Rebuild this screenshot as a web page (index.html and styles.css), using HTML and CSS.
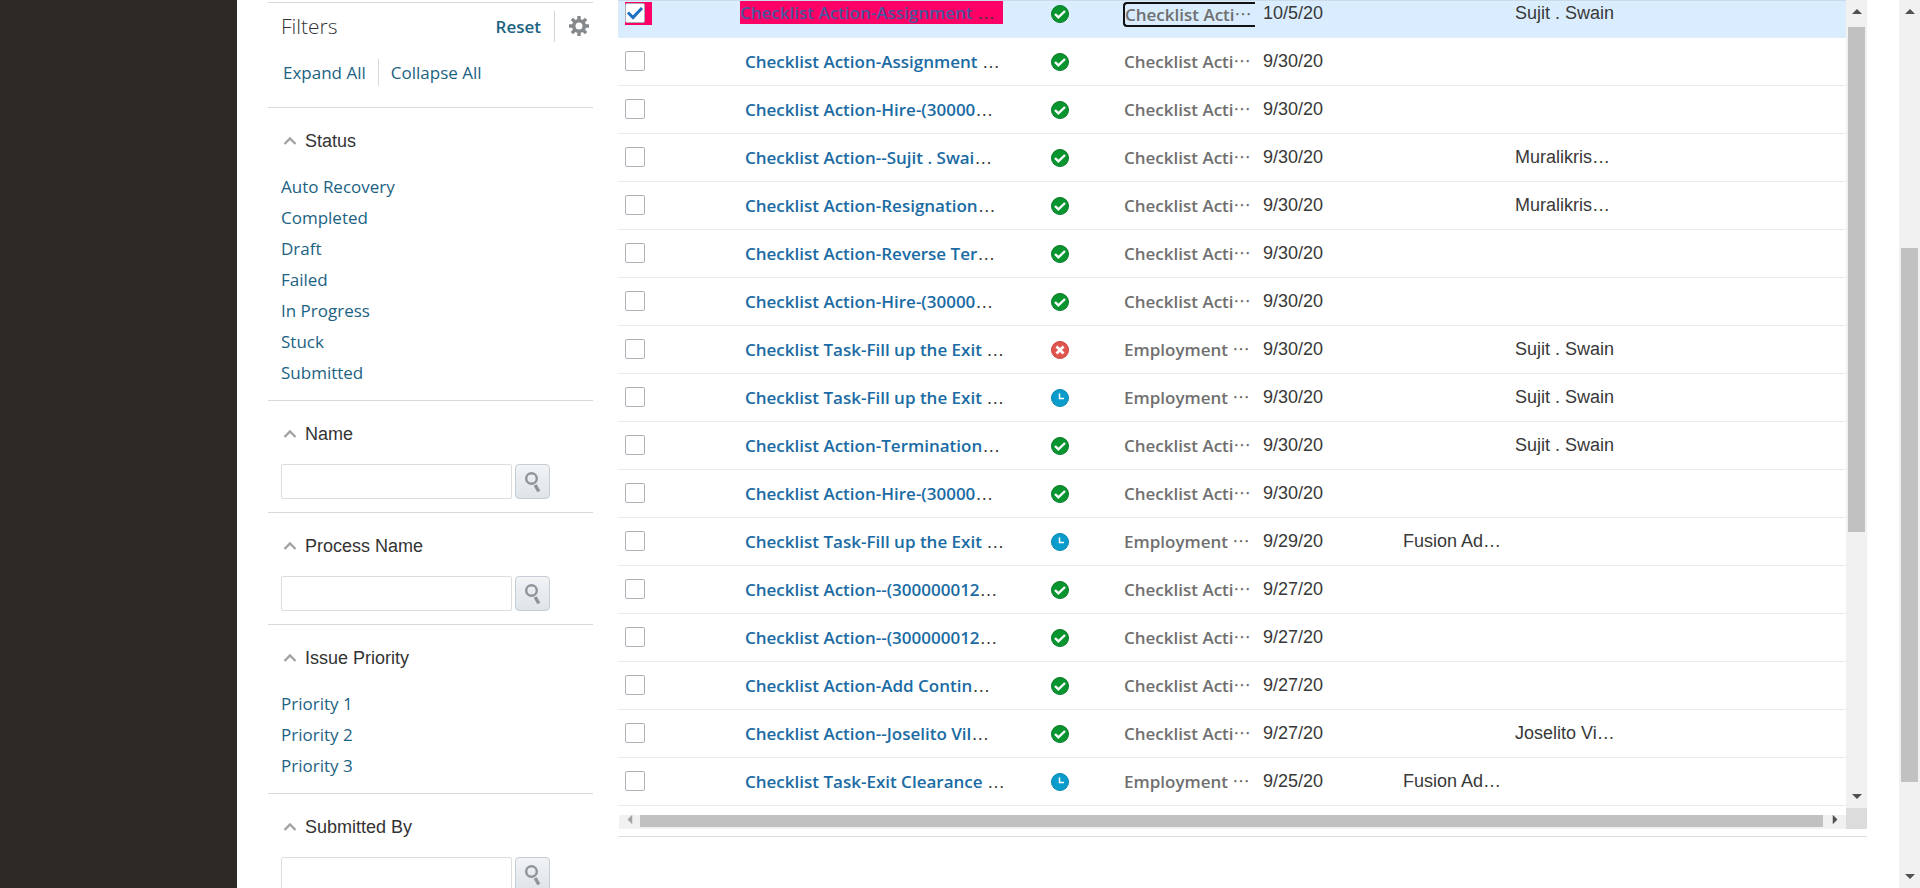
FILE: index.html
```html
<!DOCTYPE html>
<html lang="en">
<head>
<meta charset="utf-8">
<title>Transactions</title>
<link rel="stylesheet" href="styles.css">
</head>
<body>
<svg class="sprite" aria-hidden="true">
  <symbol id="ok" viewBox="0 0 18 18"><circle cx="9" cy="9" r="8.5" fill="#08952f" stroke="#067a27"/><path d="M4 9l3.400 3.400L14 6" fill="none" stroke="#fff" stroke-width="2.400"/></symbol>
  <symbol id="fail" viewBox="0 0 18 18"><circle cx="9" cy="9" r="8.500" fill="#e0564f" stroke="#c9463f"/><path d="M5.500 5.500l7 7M12.500 5.500l-7 7" fill="none" stroke="#fff" stroke-width="2.800"/></symbol>
  <symbol id="wait" viewBox="0 0 18 18"><circle cx="9" cy="9" r="8.500" fill="#0a9ccb" stroke="#0886b5"/><path d="M8.500 4.500v5h4.500" fill="none" stroke="#fff" stroke-width="1.500"/></symbol>
  <symbol id="chev" viewBox="0 0 14 10"><path d="M1.500 8L7 2.500L12.500 8" fill="none" stroke="#a3a3a3" stroke-width="2.400"/></symbol>
  <symbol id="lens" viewBox="0 0 18 22"><circle cx="7.500" cy="7.500" r="5.300" fill="none" stroke="#8f9497" stroke-width="2.400"/><path d="M11.200 14l3.600 6.500" stroke="#8f9497" stroke-width="3.400"/></symbol>
  <symbol id="gear" viewBox="0 0 20 20"><circle cx="10" cy="10" r="5.300" fill="none" stroke="#85898c" stroke-width="3.600"/><path d="M10 0v4M10 16v4M0 10h4M16 10h4M2.900 2.900l2.900 2.900M14.200 14.200l2.900 2.900M17.100 2.900l-2.900 2.900M5.800 14.200l-2.900 2.900" stroke="#85898c" stroke-width="3.400"/></symbol>
  <symbol id="tri" viewBox="0 0 10 5"><path d="M0 5L5 0L10 5Z" fill="currentColor"/></symbol>
</svg>
<div class="page">
  <div class="rail"></div>
  <aside class="filters">
    <div class="filters-head">
      <h2>Filters</h2>
      <a class="reset" href="#">Reset</a>
      <button class="gear" type="button" aria-label="Settings"><svg width="20" height="20"><use href="#gear"/></svg></button>
    </div>
    <div class="toggle-all"><a href="#">Expand All</a><a href="#">Collapse All</a></div>
    <section>
      <h3><svg width="14" height="10"><use href="#chev"/></svg>Status</h3>
      <ul>
        <li><a href="#">Auto Recovery</a></li><li><a href="#">Completed</a></li><li><a href="#">Draft</a></li><li><a href="#">Failed</a></li><li><a href="#">In Progress</a></li><li><a href="#">Stuck</a></li><li><a href="#">Submitted</a></li>
      </ul>
    </section>
    <section>
      <h3><svg width="14" height="10"><use href="#chev"/></svg><label for="f-name">Name</label></h3>
      <div class="search"><input id="f-name" type="text"><button type="button" aria-label="Search name"><svg width="18" height="22"><use href="#lens"/></svg></button></div>
    </section>
    <section>
      <h3><svg width="14" height="10"><use href="#chev"/></svg><label for="f-process">Process Name</label></h3>
      <div class="search"><input id="f-process" type="text"><button type="button" aria-label="Search process name"><svg width="18" height="22"><use href="#lens"/></svg></button></div>
    </section>
    <section>
      <h3><svg width="14" height="10"><use href="#chev"/></svg>Issue Priority</h3>
      <ul>
        <li><a href="#">Priority 1</a></li><li><a href="#">Priority 2</a></li><li><a href="#">Priority 3</a></li>
      </ul>
    </section>
    <section>
      <h3><svg width="14" height="10"><use href="#chev"/></svg><label for="f-by">Submitted By</label></h3>
      <div class="search"><input id="f-by" type="text"><button type="button" aria-label="Search submitted by"><svg width="18" height="22"><use href="#lens"/></svg></button></div>
    </section>
  </aside>
  <main class="results">
    <div class="grid-row">
      <div class="grid-main">
        <table>
          <colgroup><col class="c-check"><col class="c-name"><col class="c-icon"><col class="c-type"><col class="c-date"><col class="c-init"><col></colgroup>
          <tbody>
            <tr class="selected"><td><span class="mark"><input type="checkbox" checked aria-label="Select row 1"></span></td><td class="name"><a href="#">Checklist Action-Assignment </a>…</td><td class="icon"><svg><use href="#ok"/></svg></td><td class="type"><span class="focus">Checklist Acti<i lang="zh-TW">…</i></span></td><td class="date">10/5/20</td><td></td><td>Sujit . Swain</td></tr>
            <tr><td><input type="checkbox" aria-label="Select row 2"></td><td class="name"><a href="#">Checklist Action-Assignment </a>…</td><td class="icon"><svg><use href="#ok"/></svg></td><td class="type">Checklist Acti<i lang="zh-TW">…</i></td><td class="date">9/30/20</td><td></td><td></td></tr>
            <tr><td><input type="checkbox" aria-label="Select row 3"></td><td class="name"><a href="#">Checklist Action-Hire-(30000</a>…</td><td class="icon"><svg><use href="#ok"/></svg></td><td class="type">Checklist Acti<i lang="zh-TW">…</i></td><td class="date">9/30/20</td><td></td><td></td></tr>
            <tr><td><input type="checkbox" aria-label="Select row 4"></td><td class="name"><a href="#">Checklist Action--Sujit . Swai</a>…</td><td class="icon"><svg><use href="#ok"/></svg></td><td class="type">Checklist Acti<i lang="zh-TW">…</i></td><td class="date">9/30/20</td><td></td><td>Muralikris…</td></tr>
            <tr><td><input type="checkbox" aria-label="Select row 5"></td><td class="name"><a href="#">Checklist Action-Resignation</a>…</td><td class="icon"><svg><use href="#ok"/></svg></td><td class="type">Checklist Acti<i lang="zh-TW">…</i></td><td class="date">9/30/20</td><td></td><td>Muralikris…</td></tr>
            <tr><td><input type="checkbox" aria-label="Select row 6"></td><td class="name"><a href="#">Checklist Action-Reverse Ter</a>…</td><td class="icon"><svg><use href="#ok"/></svg></td><td class="type">Checklist Acti<i lang="zh-TW">…</i></td><td class="date">9/30/20</td><td></td><td></td></tr>
            <tr><td><input type="checkbox" aria-label="Select row 7"></td><td class="name"><a href="#">Checklist Action-Hire-(30000</a>…</td><td class="icon"><svg><use href="#ok"/></svg></td><td class="type">Checklist Acti<i lang="zh-TW">…</i></td><td class="date">9/30/20</td><td></td><td></td></tr>
            <tr><td><input type="checkbox" aria-label="Select row 8"></td><td class="name"><a href="#">Checklist Task-Fill up the Exit </a>…</td><td class="icon"><svg><use href="#fail"/></svg></td><td class="type">Employment <i lang="zh-TW">…</i></td><td class="date">9/30/20</td><td></td><td>Sujit . Swain</td></tr>
            <tr><td><input type="checkbox" aria-label="Select row 9"></td><td class="name"><a href="#">Checklist Task-Fill up the Exit </a>…</td><td class="icon"><svg><use href="#wait"/></svg></td><td class="type">Employment <i lang="zh-TW">…</i></td><td class="date">9/30/20</td><td></td><td>Sujit . Swain</td></tr>
            <tr><td><input type="checkbox" aria-label="Select row 10"></td><td class="name"><a href="#">Checklist Action-Termination</a>…</td><td class="icon"><svg><use href="#ok"/></svg></td><td class="type">Checklist Acti<i lang="zh-TW">…</i></td><td class="date">9/30/20</td><td></td><td>Sujit . Swain</td></tr>
            <tr><td><input type="checkbox" aria-label="Select row 11"></td><td class="name"><a href="#">Checklist Action-Hire-(30000</a>…</td><td class="icon"><svg><use href="#ok"/></svg></td><td class="type">Checklist Acti<i lang="zh-TW">…</i></td><td class="date">9/30/20</td><td></td><td></td></tr>
            <tr><td><input type="checkbox" aria-label="Select row 12"></td><td class="name"><a href="#">Checklist Task-Fill up the Exit </a>…</td><td class="icon"><svg><use href="#wait"/></svg></td><td class="type">Employment <i lang="zh-TW">…</i></td><td class="date">9/29/20</td><td>Fusion Ad…</td><td></td></tr>
            <tr><td><input type="checkbox" aria-label="Select row 13"></td><td class="name"><a href="#">Checklist Action--(300000012</a>…</td><td class="icon"><svg><use href="#ok"/></svg></td><td class="type">Checklist Acti<i lang="zh-TW">…</i></td><td class="date">9/27/20</td><td></td><td></td></tr>
            <tr><td><input type="checkbox" aria-label="Select row 14"></td><td class="name"><a href="#">Checklist Action--(300000012</a>…</td><td class="icon"><svg><use href="#ok"/></svg></td><td class="type">Checklist Acti<i lang="zh-TW">…</i></td><td class="date">9/27/20</td><td></td><td></td></tr>
            <tr><td><input type="checkbox" aria-label="Select row 15"></td><td class="name"><a href="#">Checklist Action-Add Contin</a>…</td><td class="icon"><svg><use href="#ok"/></svg></td><td class="type">Checklist Acti<i lang="zh-TW">…</i></td><td class="date">9/27/20</td><td></td><td></td></tr>
            <tr><td><input type="checkbox" aria-label="Select row 16"></td><td class="name"><a href="#">Checklist Action--Joselito Vil</a>…</td><td class="icon"><svg><use href="#ok"/></svg></td><td class="type">Checklist Acti<i lang="zh-TW">…</i></td><td class="date">9/27/20</td><td></td><td>Joselito Vi…</td></tr>
            <tr><td><input type="checkbox" aria-label="Select row 17"></td><td class="name"><a href="#">Checklist Task-Exit Clearance </a>…</td><td class="icon"><svg><use href="#wait"/></svg></td><td class="type">Employment <i lang="zh-TW">…</i></td><td class="date">9/25/20</td><td>Fusion Ad…</td><td></td></tr>
          </tbody>
        </table>
        <div class="hbar"><svg class="left"><use href="#tri"/></svg><div class="thumb"></div><svg class="right"><use href="#tri"/></svg></div>
      </div>
      <div class="vbar-col">
        <div class="vbar"><svg><use href="#tri"/></svg><div class="track"><div class="thumb thumb-grid"></div></div><svg class="down"><use href="#tri"/></svg></div>
        <div class="corner"></div>
      </div>
    </div>
  </main>
  <div class="vbar page-bar"><svg><use href="#tri"/></svg><div class="track page-track"><div class="thumb"></div></div><svg class="down"><use href="#tri"/></svg></div>
</div>
</body>
</html>
```
FILE: styles.css
```css
* { box-sizing: border-box; }
body {
  margin: 0;
  background: #fff;
  color: #383838;
  font: 18px/24px "Liberation Sans", Arial, sans-serif;
  overflow: hidden;
}
.sprite { display: none; }
a { text-decoration: none; color: #1b6283; font-family: "Open Sans", "Noto Sans", sans-serif; }
h2, h3, ul { margin: 0; padding: 0; font-weight: 400; }
ul { list-style: none; }
button { padding: 0; cursor: pointer; }

.page { display: flex; height: 100vh; overflow: hidden; }
.rail { flex: none; width: 237px; background: #2d2926; }

/* Filter panel */
.filters { flex: none; width: 325px; margin: 2px 25px 0 31px; font-size: 17px; }
.filters-head {
  display: flex;
  align-items: center;
  height: 47px;
  padding: 0 4px 0 13px;
  border-top: 1px solid #d6dadb;
}
.filters-head h2 { flex: 1; font: 300 21px/30px "Open Sans", "Noto Sans", sans-serif; color: #333; }
.reset { padding-right: 13px; font-weight: 600; font-size: 17px; line-height: 31px; border-right: 1px solid #d6d6d0; }
.gear { display: flex; margin-left: 14px; border: 0; background: none; }
.toggle-all { display: flex; height: 58px; padding: 10px 0 0 15px; }
.toggle-all a { line-height: 27px; height: 27px; }
.toggle-all a + a { margin-left: 12px; padding-left: 12px; border-left: 1px solid #d6dadb; }
.filters section { padding: 0 0 12px 13px; border-top: 1px solid #d6dadb; }
.filters h3 { display: flex; align-items: center; gap: 8px; padding: 21px 0 18px 2px; font-size: 18px; line-height: 24px; color: #333; }
.filters li a { display: block; line-height: 31px; }
.search { display: flex; gap: 3px; padding-bottom: 1px; }
.search input { width: 231px; height: 35px; border: 1px solid #dadee0; border-radius: 2px; font: inherit; }
.search button {
  display: flex;
  justify-content: center;
  padding-top: 6px;
  width: 35px;
  height: 35px;
  border: 1px solid #c4ced7;
  border-radius: 4px;
  background: linear-gradient(#f1f3f5, #dfe4e8);
}

/* Result grid */
.results { flex: 1; min-width: 0; }
.grid-row { display: flex; padding-bottom: 7px; border-bottom: 1px solid #d9dcde; }
.grid-main { flex: 1; min-width: 0; }
table { width: 100%; table-layout: fixed; border-collapse: separate; border-spacing: 0; }
.c-check { width: 122px; }
.c-name { width: 263px; }
.c-icon { width: 121px; }
.c-type { width: 131px; }
.c-date { width: 148px; }
.c-init { width: 112px; }
td { height: 48px; padding: 0 0 2px; border-bottom: 1px solid #ebebeb; white-space: nowrap; vertical-align: middle; }
td:first-child { padding-left: 7px; }
td input {
  display: block;
  appearance: none;
  width: 20px;
  height: 20px;
  margin: 0;
  border: 1px solid #aab0b5;
  border-radius: 2px;
  background: #fff;
}
td input:checked {
  background: #fff url("data:image/svg+xml,%3Csvg xmlns='http://www.w3.org/2000/svg' viewBox='0 0 18 18'%3E%3Cpath d='M2 8.500l5 5L16 4' fill='none' stroke='%231c6fc0' stroke-width='3'/%3E%3C/svg%3E");
}
td.name { padding-left: 5px; padding-bottom: 0; }
.name a { font-weight: 600; font-size: 17px; color: #1a6ba4; white-space: pre; }
td.icon { padding: 1px 0 0 48px; }
.icon svg { display: block; width: 18px; height: 18px; }
td.type { padding-bottom: 0; font: 600 17px/24px "Open Sans", "Noto Sans", sans-serif; color: #707070; }
.type i { font: 17px/17px "Noto Sans CJK TC", sans-serif; }
td.date { padding-left: 8px; }

.selected td { height: 38px; padding-bottom: 12px; border-top: 1px solid #cbdbe8; border-bottom-color: #e3edf5; background: #d9edfe; }
.selected td.icon { padding: 0 0 11px 48px; }
.selected td.name { padding: 0 0 12px; background: linear-gradient(#ff0066, #ff0066) 0 0 / 100% 23px no-repeat #d9edfe; }
.selected td.name a { color: #4b559d; }
.selected td.type { padding-bottom: 10px; }
.mark { display: block; width: 27px; padding: 1px 0 2px; background: #ff0066; }
.focus { display: block; line-height: 21px; border: solid #111; border-width: 2px 0 2px 2px; border-radius: 4px 0 0 4px; margin: 0 0 0 -1px; width: 132px; }

/* Scroll bars */
.thumb { background: #c1c1c1; }
.hbar { display: flex; align-items: flex-start; height: 14px; margin: 9px 0 0 1px; background: #f1f1f1; }
.hbar .thumb { flex: 1; height: 12px; }
.hbar svg { width: 10px; height: 5px; }
.hbar .left { margin: 2px 5px 0 6px; color: #a3a3a3; transform: rotate(-90deg); }
.hbar .right { margin: 2px 6px 0 7px; color: #505050; transform: rotate(90deg); }
.vbar-col { display: flex; flex-direction: column; width: 21px; }
.vbar { display: flex; flex: 1; flex-direction: column; align-items: center; width: 21px; padding: 9px 0; background: #f1f1f1; color: #505050; }
.vbar svg { flex: none; width: 10px; height: 5px; }
.vbar .down { transform: rotate(180deg); }
.track { flex: 1; width: 17px; padding: 13px 0; }
.thumb-grid { height: 67%; }
.corner { height: 21px; background: #dcdcdc; }
.page-bar { flex: none; margin-left: 32px; }
.page-track { display: flex; flex-direction: column; }
.page-track::before { content: ""; flex: 221; }
.page-track .thumb { flex: 534; }
.page-track::after { content: ""; flex: 79; }
```
